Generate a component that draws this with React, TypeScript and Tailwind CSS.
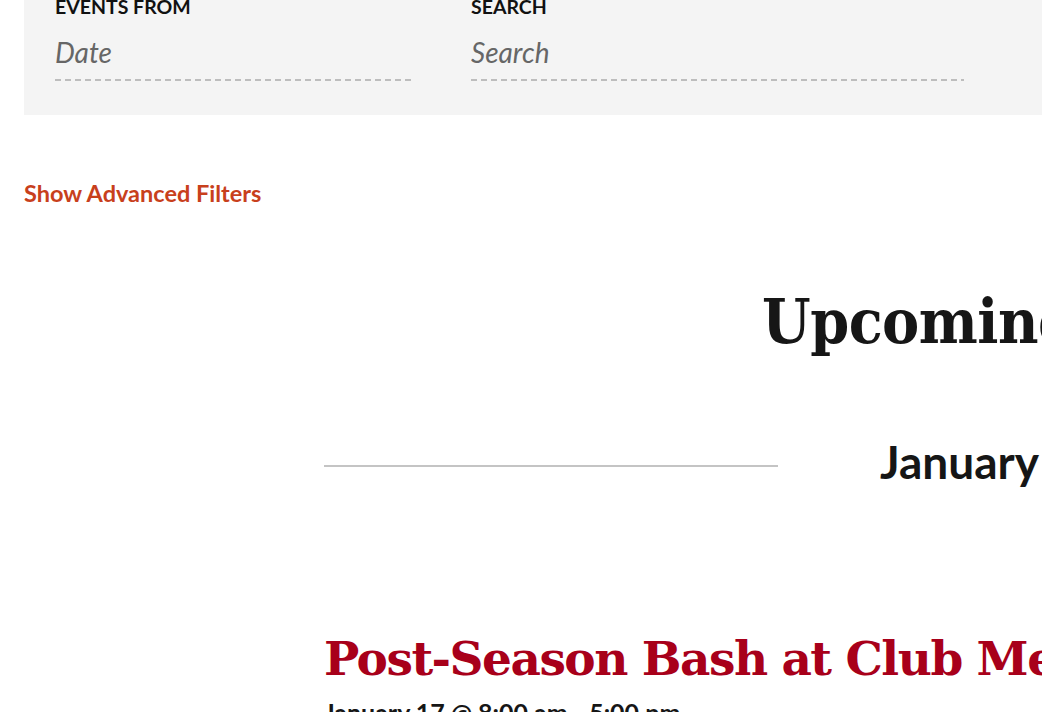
import React from 'react'

const sans = "font-['Lato','Liberation_Sans',sans-serif]"
const slab = "font-['DejaVu_Serif','Liberation_Serif',serif]"
const slabNarrow = "font-['DejaVu_Serif_Condensed','DejaVu_Serif','Liberation_Serif',serif]"

function FilterField({ label, placeholder, width }: { label: string; placeholder: string; width: string }) {
  return (
    <div className={`flex flex-col ${width}`}>
      <span className={`${sans} text-[19.5px] leading-[22px] font-bold uppercase text-[#111]`}>{label}</span>
      <input
        placeholder={placeholder}
        className={`${sans} mt-[13px] h-[48px] pb-[6px] bg-transparent italic text-[28px] text-[#555] placeholder:text-[#666] outline-none`}
      />
      <div className="h-[2px] bg-[linear-gradient(to_right,#bdbdbd_60%,transparent_60%)] bg-[length:10px_2px]" />
    </div>
  )
}

export default function App() {
  return (
    <div className="w-[1042px] h-[712px] overflow-hidden bg-white">
      <div className="ml-6 w-[1100px] -mt-[4px] bg-[#f4f4f4] pl-[31px] pb-[34px] flex gap-[60px]">
        <FilterField label="Events From" placeholder="Date" width="w-[356px]" />
        <FilterField label="Search" placeholder="Search" width="w-[493px]" />
      </div>

      <div className="ml-6 mt-[64px] h-[28px]">
        <a href="#" className={`${sans} block text-[23.5px] leading-[28px] font-bold text-[#c8401c]`}>Show Advanced Filters</a>
      </div>

      <div className="ml-[324px] w-[1200px]">
        <h1 className={`${slabNarrow} mt-[79px] pl-[438px] text-[62px] leading-[72px] font-bold text-[#161616] whitespace-nowrap tracking-[-0.5px]`}>
          Upcoming Events
        </h1>

        <div className="mt-[79px] flex items-start whitespace-nowrap">
          <div className="mt-[28px] w-[454px] h-[2px] bg-[#c4c4c4]" />
          <h2 className={`${sans} ml-[102px] text-[46px] leading-[50px] font-bold text-[#161616]`}>January 2019</h2>
        </div>

        <div className="mt-[142px]">
          <h3 className={`${slab} text-[47px] leading-[60px] font-bold text-[#a8001a] whitespace-nowrap tracking-[-1.5px]`}>
            Post-Season Bash at Club Med
          </h3>
          <p className={`${sans} mt-[8px] text-[25px] leading-[30px] font-bold text-[#161616] whitespace-nowrap`}>
            January 17 @ 8:00 am - 5:00 pm
          </p>
        </div>
      </div>
    </div>
  )
}
